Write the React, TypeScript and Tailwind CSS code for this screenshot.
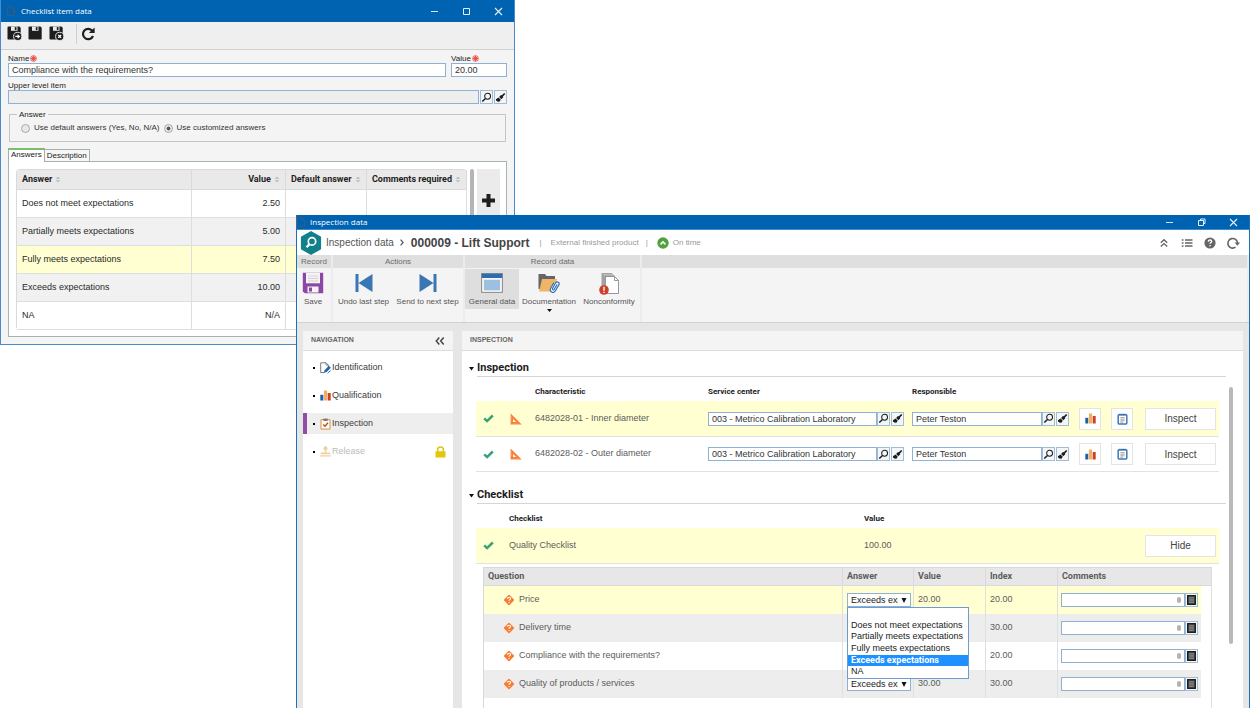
import React, { useState } from "react";

const questions = [
  { id: "price", text: "Price", value: "20.00", index: "20.00" },
  { id: "delivery", text: "Delivery time", value: "30.00", index: "30.00" },
  { id: "compliance", text: "Compliance with the requirements?", value: "20.00", index: "20.00" },
  { id: "quality", text: "Quality of products / services", value: "30.00", index: "30.00" },
];

const answerOptions = [
  "",
  "Does not meet expectations",
  "Partially meets expectations",
  "Fully meets expectations",
  "Exceeds expectations",
  "NA",
];

const answerRows = [
  { name: "Does not meet expectations", value: "2.50", bg: "bg-white" },
  { name: "Partially meets expectations", value: "5.00", bg: "bg-[#f1f1f1]" },
  { name: "Fully meets expectations", value: "7.50", bg: "bg-[#ffffd2]" },
  { name: "Exceeds expectations", value: "10.00", bg: "bg-[#f1f1f1]" },
  { name: "NA", value: "N/A", bg: "bg-white" },
];

/* ---------- icons ---------- */

function PageIcon() {
  return (
    <svg viewBox="0 0 8 10" className="h-[10px] w-2" fill="none" stroke="#3f5a78" strokeWidth="1">
      <path d="M.5.5h4.5l2.5 2.5v6.5h-7zM5 .5V3h2.5" />
    </svg>
  );
}

function DiskIcon({ badge }: { badge?: "next" | "close" }) {
  return (
    <svg viewBox="0 0 15 15" className="h-[15px] w-[15px]">
      <path d="M1.5 0.5h11l1.2 1.2v11q0 .8-.8.8H1.3q-.8 0-.8-.8V1.300q0-.8 1-.8z" fill="#1e1e1e" />
      <path d="M4 .5h6.500v4.300H4z" fill="#e9e9e9" />
      <path d="M7.800 1.100h1.700v3H7.800z" fill="#1e1e1e" />
      {badge && (
        <>
          <circle cx="10.700" cy="10.400" r="4.100" fill="#1e1e1e" stroke="#efefef" strokeWidth=".9" />
          {badge === "next" ? (
            <path d="M8.300 9.700h2.300V8l2.700 2.400-2.700 2.400v-1.700H8.300z" fill="#fff" />
          ) : (
            <path d="M9.300 9l2.800 2.800M12.100 9l-2.800 2.800" stroke="#fff" strokeWidth="1.200" />
          )}
        </>
      )}
    </svg>
  );
}

function ReloadIcon() {
  return (
    <svg viewBox="0 0 14 14" className="h-[14px] w-[14px]" fill="none">
      <path d="M11.300 3.800A5.200 5.200 0 1 0 12 9" stroke="#1e1e1e" strokeWidth="2.200" />
      <path d="M13.600.4v5.700H7.900z" fill="#1e1e1e" />
    </svg>
  );
}

function RequiredIcon() {
  return (
    <svg viewBox="0 0 8 8" className="h-[7px] w-[7px]" fill="none" stroke="#e8463c">
      <circle cx="4" cy="4" r="3.300" strokeWidth=".8" fill="#fbd5d2" />
      <path d="M4 1v6M1 4h6M2 2l4 4M6 2L2 6" strokeWidth="1" />
    </svg>
  );
}

function SearchGlyph() {
  return (
    <svg viewBox="0 0 12 12" className="h-[11px] w-[11px]" fill="none" stroke="#1c1c1c">
      <circle cx="7.200" cy="4.600" r="3.200" strokeWidth="1.100" />
      <path d="M4.900 7L1.400 10.300" strokeWidth="1.600" />
    </svg>
  );
}

function BrushGlyph() {
  return (
    <svg viewBox="0 0 12 12" className="h-[11px] w-[11px]">
      <path d="M9.900 1l1.300 1.200-2.500 2.700.3.800-2.100 2.200-2.400-2.500 2-2.200 1 .3z" fill="#1c1c1c" />
      <path d="M3.900 6l2.400 2.500-2 2.600-.9-1-.7.500-.8-1-.7.100L1 7.900z" fill="#1c1c1c" />
    </svg>
  );
}

function CheckIcon() {
  return (
    <svg viewBox="0 0 11 9" className="h-[9px] w-[11px]" fill="none">
      <path d="M1.200 4.300l2.900 2.800L9.800 1.500" stroke="#36a275" strokeWidth="2.500" />
    </svg>
  );
}

function SetSquareIcon() {
  return (
    <svg viewBox="0 0 12 12" className="h-3 w-3">
      <path d="M.6.5L11.700 11.500H.6zM3 6v3.100h3.200z" fill="#f98038" fillRule="evenodd" />
      <path d="M.6 3.500h1M.6 5.500h1M.6 7.500h1M4 11.500v-1M6 11.500v-1M8 11.500v-1" stroke="#ffe0cd" strokeWidth=".5" />
    </svg>
  );
}

function BarsIcon() {
  return (
    <svg viewBox="0 0 11 11" className="h-[11px] w-[11px]">
      <path d="M.3 4.800h3V10.500h-3z" fill="#1c5faa" />
      <path d="M3.900.5h3.200v10H3.900z" fill="#ecb060" />
      <path d="M7.700 3h3v7.500h-3z" fill="#cf3f26" />
    </svg>
  );
}

function NotepadIcon() {
  return (
    <svg viewBox="0 0 11 12" className="h-3 w-[11px]">
      <rect x="1.200" y="1.700" width="8.600" height="9.200" rx=".8" fill="#fff" stroke="#3b78b8" strokeWidth="1.500" />
      <path d="M3.400 4.600h4.200M3.400 6.200h4.200M3.400 7.800h4.200M3.400 9.200h2.600" stroke="#8c8c8c" strokeWidth=".8" />
      <path d="M2.900.6v2M4.700.6v2M6.400.6v2M8.100.6v2" stroke="#3b6a9a" strokeWidth=".8" />
    </svg>
  );
}

function QuestionDiamond() {
  return (
    <svg viewBox="0 0 12 12" className="h-3 w-3 shrink-0">
      <rect x="2.100" y="2.100" width="7.800" height="7.800" rx=".8" transform="rotate(45 6 6)" fill="#fa7c33" />
      <path d="M4.400 4.700q0-1.500 1.600-1.500t1.500 1.400q0 .8-.8 1.200-.6.300-.6 1M6.100 7.900v1.200" stroke="#fff" strokeWidth="1.100" fill="none" />
    </svg>
  );
}

function NotesIcon() {
  return (
    <svg viewBox="0 0 9 10" className="h-[10px] w-[9px]">
      <rect x=".7" y=".7" width="7.600" height="8.600" fill="#555" stroke="#151515" strokeWidth="1.300" />
      <path d="M2 2.700h5M2 4.300h5M2 5.900h5M2 7.500h5" stroke="#9a9a9a" strokeWidth=".7" />
    </svg>
  );
}

function SaveIcon() {
  return (
    <svg viewBox="0 0 22 22" className="h-[22px] w-[22px]">
      <path d="M.8.8h20.400v20.400H2.800l-2-2z" fill="#8b47a6" />
      <path d="M4 .8h14v10.500H4z" fill="#f6f3f7" />
      <path d="M6 4h10M6 6.500h10M6 9h10" stroke="#c9c9c9" strokeWidth=".8" />
      <path d="M5.500 14.500h11v6H5.500z" fill="#f4f4f4" />
      <path d="M7 15.500h3v4H7z" fill="#8b47a6" />
    </svg>
  );
}

function StepIcon({ back = false }: { back?: boolean }) {
  return (
    <svg viewBox="0 0 20 20" className="h-5 w-5" fill="#3a76b5">
      {back ? <path d="M1.500 1h3v18h-3zM18.500 1v18L4.500 10z" /> : <path d="M15.500 1h3v18h-3zM1.500 1v18l14-9z" />}
    </svg>
  );
}

function GeneralDataIcon() {
  return (
    <svg viewBox="0 0 22 20" className="h-5 w-[22px]">
      <rect x=".6" y=".6" width="20.800" height="18.800" fill="#f4f4f4" stroke="#8a8a8a" strokeWidth="1" />
      <path d="M.8.600h20.400v4.400H.8z" fill="#2f6cae" />
      <path d="M3 6.800h16v10.500H3z" fill="#9dbfe2" />
    </svg>
  );
}

function DocumentationIcon() {
  return (
    <svg viewBox="0 0 22 21" className="h-[21px] w-[22px]">
      <path d="M.5 1h6.500l1.500 2h8.500v13H.5z" fill="#656565" />
      <path d="M4 6h15l-3.500 12.500H1z" fill="#edb565" />
      <g fill="none" stroke="#2d6bb0" strokeWidth="1.100" transform="rotate(30 16.500 14)">
        <path d="M13.800 10.500v6.300q0 3 2.700 3t2.700-3V10q0-2-1.900-2t-1.900 2v6q0 1.100 1 1.100t1-1.100v-5.500" fill="#f4f4f4" />
      </g>
    </svg>
  );
}

function NonconformityIcon() {
  return (
    <svg viewBox="0 0 22 23" className="h-[23px] w-[22px]">
      <path d="M3.500 1h10l3 2.500v3H7V18H3.500z" fill="#a2a2a2" />
      <path d="M4.800 2.500h10M6 4h10" stroke="#d0d0d0" strokeWidth=".6" />
      <path d="M7.500 4.500h9l4 4V21.500h-13z" fill="#fff" stroke="#8c8c8c" strokeWidth=".9" />
      <path d="M16.500 4.500v4h4" fill="none" stroke="#8c8c8c" strokeWidth=".9" />
      <circle cx="6" cy="18" r="4.800" fill="#cb4229" />
      <path d="M6 14.800v4M6 19.800v1.300" stroke="#fff" strokeWidth="1.400" />
    </svg>
  );
}

function HexLogo() {
  return (
    <svg viewBox="0 0 22 24" className="h-6 w-[22px]">
      <path d="M11 .8l9.400 5.400v11.600L11 23.200 1.600 17.800V6.200z" fill="#12808a" stroke="#12808a" strokeWidth="1.400" strokeLinejoin="round" />
      <circle cx="12" cy="10.400" r="3.700" fill="none" stroke="#fff" strokeWidth="1.700" />
      <path d="M9.400 13.200l-2.900 3" stroke="#fff" strokeWidth="2.200" />
    </svg>
  );
}

function IdentificationIcon() {
  return (
    <svg viewBox="0 0 11 12" className="h-3 w-[11px]" fill="none">
      <path d="M.7.800h5.300l2.300 2.300v2M.7.800v9.700h4" stroke="#6d6d6d" strokeWidth=".9" />
      <path d="M6 .8v2.300h2.300" stroke="#6d6d6d" strokeWidth=".7" />
      <path d="M4 10.800l.6-2.600 4.300-4.400 2 1.900-4.300 4.400z" fill="#1c66ae" />
      <path d="M7.500 11.200l3-2.500" stroke="#1c66ae" strokeWidth=".9" />
    </svg>
  );
}

function ClipboardIcon() {
  return (
    <svg viewBox="0 0 11 12" className="h-3 w-[11px]" fill="none">
      <rect x="1" y="1.700" width="9" height="9.500" rx=".6" fill="#fff" stroke="#dba45c" strokeWidth="1.200" />
      <path d="M3.300.6h4.400v2.300H3.300z" fill="#777" />
      <path d="M3.300 6.500l1.700 1.800L8 4.800" stroke="#c9402c" strokeWidth="1.400" />
    </svg>
  );
}

function StampIcon() {
  return (
    <svg viewBox="0 0 11 11" className="h-[11px] w-[11px]" fill="#f0cfa3">
      <circle cx="5.500" cy="2.400" r="2.100" />
      <path d="M4.800 3.500h1.400v3H10l.7 1.700H.3L1 6.500h3.800zM.3 9.200h10.400v1.200H.3z" />
    </svg>
  );
}

function LockIcon() {
  return (
    <svg viewBox="0 0 11 12" className="h-3 w-[11px]">
      <path d="M2.700 6V3.600q0-2.600 2.800-2.600t2.800 2.600V6" fill="none" stroke="#e0c413" strokeWidth="1.500" />
      <rect x=".5" y="5.300" width="10" height="6.200" rx=".5" fill="#e3c70d" />
    </svg>
  );
}

function SortIcon() {
  return (
    <svg viewBox="0 0 6 7" className="h-[7px] w-[6px] shrink-0" fill="#b9b9b9">
      <path d="M3 .8l2.500 1.900h-5zM3 6.200L.5 4.300h5z" />
    </svg>
  );
}

/* ---------- shared controls ---------- */

function ToolButton({ label, children }: { label: string; children: React.ReactNode }) {
  return (
    <button
      type="button"
      aria-label={label}
      className="flex h-[14px] w-[13px] shrink-0 items-center justify-center border border-[#a3bcd6] bg-[#f3f6f9]"
    >
      {children}
    </button>
  );
}

function LookupField({ label, value, width }: { label: string; value: string; width: string }) {
  return (
    <div className="flex items-center">
      <input
        aria-label={label}
        defaultValue={value}
        className={`h-[14px] ${width} border border-[#8fb1d3] bg-white pl-[3px] text-[9px] leading-3 text-[#333]`}
      />
      <ToolButton label={`Search ${label}`}>
        <SearchGlyph />
      </ToolButton>
      <span className="w-px" />
      <ToolButton label={`Clear ${label}`}>
        <BrushGlyph />
      </ToolButton>
    </div>
  );
}

function WindowButtons({ restored = false }: { restored?: boolean }) {
  return (
    <div className="flex items-center">
      <button type="button" aria-label="Minimize" className="flex h-3 w-8 items-center justify-center">
        <svg viewBox="0 0 9 9" className="h-[9px] w-[9px]" stroke="#d6e6f4">
          <path d="M1 4.500h7" />
        </svg>
      </button>
      <button type="button" aria-label="Maximize" className="flex h-3 w-8 items-center justify-center">
        <svg viewBox="0 0 9 9" className="h-[9px] w-[9px]" fill="none" stroke="#e6f0f9">
          {restored ? <path d="M1.500 2.500h5v5h-5zM3.500 2.500v-1.500h4.500v4.500h-1.500" /> : <path d="M1.500 1.500h6v6h-6z" />}
        </svg>
      </button>
      <button type="button" aria-label="Close" className="flex h-3 w-8 items-center justify-center">
        <svg viewBox="0 0 9 9" className="h-[9px] w-[9px]" stroke="#e6f0f9" strokeWidth="1.100">
          <path d="M1 1l7 7M8 1L1 8" />
        </svg>
      </button>
    </div>
  );
}

/* ---------- checklist item window ---------- */

function HeaderCell({ children, right = false }: { children: React.ReactNode; right?: boolean }) {
  return (
    <th scope="col" className="h-5 border-r border-b border-[#dadada] bg-[#e9e9e9] px-[5px] font-['Roboto',sans-serif] text-[9px] font-bold text-[#1f1f1f]">
      <span className={`flex items-center gap-[3px] whitespace-nowrap ${right ? "justify-end" : ""}`}>
        {children}
        <SortIcon />
      </span>
    </th>
  );
}

function ChecklistItemWindow() {
  const [mode, setMode] = useState("custom");
  return (
    <section className="absolute top-0 left-0 flex w-[515px] flex-col border border-t-0 border-[#4a8ccb] bg-[#f4f4f4] text-[#222]">
      <header className="flex h-[22px] items-center bg-[#0063b1] pl-1.5">
        <PageIcon />
        <h1 className="ml-1.5 flex-1 font-['Open_Sans',sans-serif] text-[8px] leading-3 text-white">Checklist item data</h1>
        <WindowButtons />
      </header>

      <div className="flex h-7 items-center gap-[6px] border-b border-[#cfcfcf] bg-[#efefef] pb-1 pl-[6px]">
        <button type="button" aria-label="Save and continue"><DiskIcon badge="next" /></button>
        <button type="button" aria-label="Save"><DiskIcon /></button>
        <button type="button" aria-label="Save and close"><DiskIcon badge="close" /></button>
        <span className="ml-[6px] h-5 w-px bg-[#cfcfcf]" />
        <button type="button" aria-label="Refresh" className="-ml-0.5"><ReloadIcon /></button>
      </div>

      <div className="flex flex-col px-[7px] pt-1 pb-[7px]">
        <div className="flex gap-[5px]">
          <div className="flex-1">
            <label htmlFor="item-name" className="flex h-[9px] items-center gap-px text-[8px] leading-[9px]">
              Name <RequiredIcon />
            </label>
            <input id="item-name" defaultValue="Compliance with the requirements?" className="block h-[14px] w-full border border-[#8fb1d3] bg-white pl-[3px] text-[9px] leading-3 text-[#333]" />
          </div>
          <div className="w-14">
            <label htmlFor="item-value" className="flex h-[9px] items-center gap-px text-[8px] leading-[9px]">
              Value <RequiredIcon />
            </label>
            <input id="item-value" defaultValue="20.00" className="block h-[14px] w-full border border-[#8fb1d3] bg-white pl-[3px] text-[9px] leading-3 text-[#333]" />
          </div>
        </div>

        <label htmlFor="upper-item" className="mt-1 h-[9px] text-[8px] leading-[9px]">Upper level item</label>
        <div className="flex gap-px">
          <input id="upper-item" readOnly className="h-[14px] min-w-0 flex-1 border border-[#8fb1d3] bg-[#eeeeee]" />
          <ToolButton label="Search upper level item"><SearchGlyph /></ToolButton>
          <ToolButton label="Clear upper level item"><BrushGlyph /></ToolButton>
        </div>

        <fieldset className="mt-1.5 mr-px ml-px h-8 border border-[#c4c4c4] px-[11px]">
          <legend className="-ml-[4px] px-0.5 text-[8px] leading-[9px]">Answer</legend>
          <div className="flex items-center pt-[3px] text-[8px] leading-3 text-[#333]">
            <input
              type="radio" id="default-answers" name="mode" checked={mode === "default"} onChange={() => setMode("default")}
              className="h-[9px] w-[9px] appearance-none rounded-full border border-[#a9a9a9] bg-[#e8e8e8]"
            />
            <label htmlFor="default-answers" className="ml-[4px]">Use default answers (Yes, No, N/A)</label>
            <input
              type="radio" id="custom-answers" name="mode" checked={mode === "custom"} onChange={() => setMode("custom")}
              className="ml-[4px] h-[9px] w-[9px] appearance-none rounded-full border border-[#a9a9a9] bg-[#e8e8e8] checked:bg-[radial-gradient(circle,#555_35%,#e8e8e8_45%)]"
            />
            <label htmlFor="custom-answers" className="ml-[4px]">Use customized answers</label>
          </div>
        </fieldset>

        <div role="tablist" className="mt-1.5 flex items-end text-[8px]">
          <button type="button" role="tab" aria-selected="true" className="z-10 -mb-px h-[14px] border border-t-2 border-b-0 border-[#a7adb3] border-t-[#7dbb6d] bg-white px-0.5 pb-1 leading-[9px]">Answers</button>
          <button type="button" role="tab" aria-selected="false" className="h-[12px] border border-b-0 border-l-0 border-[#a7adb3] bg-[#f7f7f7] px-0.5 leading-[10px]">Description</button>
        </div>

        <div className="flex border border-[#a7b3b0] bg-white px-1.5 pt-[7px] pb-1.5 pl-[7px]">
          <table className="flex-1 table-fixed border-separate border-spacing-0 rounded-sm border border-r-0 border-b-0 border-[#dadada]">
            <colgroup>
              <col />
              <col className="w-[94px]" />
              <col className="w-[81px]" />
              <col className="w-[99px]" />
            </colgroup>
            <thead>
              <tr className="text-left">
                <HeaderCell>Answer</HeaderCell>
                <HeaderCell right>Value</HeaderCell>
                <HeaderCell>Default answer</HeaderCell>
                <HeaderCell>Comments required</HeaderCell>
              </tr>
            </thead>
            <tbody>
              {answerRows.map((row) => (
                <tr key={row.name} className={`text-[9px] text-[#2a2a2a] ${row.bg}`}>
                  <td className="h-7 border-r border-b border-[#dedede] px-[5px]">{row.name}</td>
                  <td className="border-r border-b border-[#dedede] px-[5px] text-right">{row.value}</td>
                  <td className="border-r border-b border-[#dedede]" />
                  <td className="border-r border-b border-[#dedede]" />
                </tr>
              ))}
            </tbody>
          </table>
          <span className="mx-[3px] h-[100px] w-1 rounded-full bg-[#b5b5b5]" />
          <div className="w-[23px] bg-[#ebebeb] pt-[25px]">
            <button type="button" aria-label="Add answer" className="flex w-full justify-center">
              <svg viewBox="0 0 13 13" className="h-[13px] w-[13px]" stroke="#1e1e1e" strokeWidth="4">
                <path d="M6.500 0v13M0 6.500h13" />
              </svg>
            </button>
          </div>
        </div>
      </div>
    </section>
  );
}

/* ---------- inspection window ---------- */

function RibbonGroup({ title, children, className = "" }: { title: string; children?: React.ReactNode; className?: string }) {
  return (
    <div className={`flex flex-col border-r-2 border-[#ececec] ${className}`}>
      <div className="flex h-[13px] items-center justify-center bg-[#dfdfdf] text-[8px] text-[#6c6c6c]">{title}</div>
      <div className="flex h-[54px] items-start bg-[#f4f4f4]">{children}</div>
    </div>
  );
}

function RibbonButton({ label, icon, width, active = false, menu = false }: { label: string; icon: React.ReactNode; width: string; active?: boolean; menu?: boolean }) {
  return (
    <button type="button" className={`mt-px flex flex-col items-center whitespace-nowrap text-[8px] leading-[10px] text-[#555] ${width} ${active ? "bg-[#dedede]" : ""}`}>
      <span className="flex h-7 items-center">{icon}</span>
      <span className="h-3">{label}</span>
      {menu && (
        <svg viewBox="0 0 5 3" className="h-[3px] w-[5px]"><path d="M0 0h5L2.500 3z" fill="#111" /></svg>
      )}
    </button>
  );
}

function NavItem({ icon, label, active = false, locked = false }: { icon: React.ReactNode; label: string; active?: boolean; locked?: boolean }) {
  return (
    <li>
      <a
        href="#"
        className={`flex h-[21px] items-center border-l-4 pr-[7px] pl-1.5 text-[9px] ${active ? "border-[#8e4ea8] bg-[#eeeeee]" : "border-transparent"} ${locked ? "text-[#bcbcbc]" : "text-[#3c3c3c]"}`}
      >
        <span className="mr-1 h-0.5 w-0.5 bg-black" />
        <span className="flex w-[13px] justify-center">{icon}</span>
        <span className="flex-1">{label}</span>
        {locked && <LockIcon />}
      </a>
    </li>
  );
}

function SectionTitle({ children }: { children: React.ReactNode }) {
  return (
    <h2 className="flex items-center font-['Roboto',sans-serif] text-[11px] leading-4 font-bold text-[#1d1d1d]">
      <svg viewBox="0 0 5 4" className="mr-[3px] h-1 w-[5px]"><path d="M0 0h5L2.500 3.500z" fill="#111" /></svg>
      <span className="flex-1 border-b border-[#d5d5d5]">{children}</span>
    </h2>
  );
}

function InspectButton({ children }: { children: React.ReactNode }) {
  return (
    <button type="button" className="block h-[22px] w-[71px] border border-[#e4e4e4] bg-white text-[10px] text-[#444]">{children}</button>
  );
}

function IconButton({ label, children }: { label: string; children: React.ReactNode }) {
  return (
    <button type="button" aria-label={label} className="flex h-[22px] w-[22px] items-center justify-center border border-[#e4e4e4] bg-white">{children}</button>
  );
}

function CharacteristicTable() {
  const rows = [
    { name: "6482028-01 - Inner diameter", bg: "bg-[#ffffd2]", h: "h-9" },
    { name: "6482028-02 - Outer diameter", bg: "bg-white", h: "h-[35px]" },
  ];
  const head = "h-6 pt-[6px] align-middle";
  return (
    <table className="w-full table-fixed border-separate border-spacing-0 text-left text-[9px] text-[#5c5c5c]">
      <colgroup>
        <col className="w-[26px]" />
        <col className="w-[33px]" />
        <col />
        <col className="w-[204px]" />
        <col className="w-[167px]" />
        <col className="w-8" />
        <col className="w-[34px]" />
        <col className="w-[74px]" />
      </colgroup>
      <thead className="font-['Roboto',sans-serif] text-[8px] text-[#222]">
        <tr>
          <td className={head} />
          <td />
          <th scope="col" className={head}>Characteristic</th>
          <th scope="col" className={head}>Service center</th>
          <th scope="col" className={head}>Responsible</th>
          <td />
          <td />
          <td />
        </tr>
      </thead>
      <tbody>
        {rows.map((row) => (
          <tr key={row.name} className={`${row.bg} ${row.h} *:border-b *:border-[#e2e2e2]`}>
            <td className="pl-[7px]"><CheckIcon /></td>
            <td className="pl-2"><SetSquareIcon /></td>
            <td>{row.name}</td>
            <td><LookupField label={`Service center ${row.name}`} value="003 - Metrico Calibration Laboratory" width="w-[169px]" /></td>
            <td><LookupField label={`Responsible ${row.name}`} value="Peter Teston" width="w-[130px]" /></td>
            <td><IconButton label="Chart"><BarsIcon /></IconButton></td>
            <td><IconButton label="Notes"><NotepadIcon /></IconButton></td>
            <td><InspectButton>Inspect</InspectButton></td>
          </tr>
        ))}
      </tbody>
    </table>
  );
}

function AnswerSelect({ label, open = false }: { label: string; open?: boolean }) {
  const [value, setValue] = useState("Exceeds expectations");
  return (
    <div className="relative ml-[4px] w-16">
      <select
        aria-label={`Answer: ${label}`}
        value={value}
        onChange={(e) => setValue(e.target.value)}
        className="block h-[14px] w-full appearance-none overflow-hidden border border-[#8fb1d3] bg-white pr-3 pl-[3px] text-[9px] leading-3 text-[#222]"
      >
        {answerOptions.map((o) => (
          <option key={o} value={o}>{o}</option>
        ))}
      </select>
      <svg viewBox="0 0 6 5" className="pointer-events-none absolute top-[5px] right-[4px] h-[5px] w-[6px]"><path d="M.5 0h5L3 5z" fill="#111" /></svg>
      {open && (
        <ul role="listbox" className="absolute top-[14px] left-0 z-20 flex h-[72px] w-[122px] flex-col border border-[#6f9bd0] bg-white text-[9px] leading-[11px] whitespace-nowrap text-[#222]">
          {answerOptions.map((o) => (
            <li
              key={o}
              role="option"
              aria-selected={o === value}
              className={`min-h-0 flex-1 pl-[3px] ${o === value ? "bg-[#1e90ff] font-['Roboto',sans-serif] font-bold text-white" : ""}`}
            >
              {o}
            </li>
          ))}
        </ul>
      )}
    </div>
  );
}

function QuestionTable() {
  const head = "h-[18px] border-r border-b border-[#dadada] bg-[#e7e7e7] pl-1";
  const cell = "h-7 border-r border-[#dfdfdf]";
  return (
    <table className="w-full table-fixed border-separate border-spacing-0 border-t border-l border-[#d8d8d8] text-left text-[9px] text-[#5c5c5c]">
      <colgroup>
        <col />
        <col className="w-[71px]" />
        <col className="w-[72px]" />
        <col className="w-[72px]" />
        <col className="w-[143px]" />
        <col className="w-[11px]" />
      </colgroup>
      <thead className="font-['Roboto',sans-serif]">
        <tr>
          <th scope="col" className={head}>Question</th>
          <th scope="col" className={head}>Answer</th>
          <th scope="col" className={head}>Value</th>
          <th scope="col" className={head}>Index</th>
          <th scope="col" colSpan={2} className={head}>Comments</th>
        </tr>
      </thead>
      <tbody>
        {questions.map((q, i) => {
          const bg = i === 0 ? "bg-[#ffffd2]" : i % 2 ? "bg-[#ededed]" : "bg-white";
          return (
            <tr key={q.id}>
              <td className={`${cell} ${bg}`}>
                <span className="flex items-center gap-1 pl-[19px]"><QuestionDiamond />{q.text}</span>
              </td>
              <td className={`${cell} ${bg}`}><AnswerSelect label={q.text} open={i === 0} /></td>
              <td className={`${cell} ${bg} pl-1`}>{q.value}</td>
              <td className={`${cell} ${bg} pl-1`}>{q.index}</td>
              <td className={`h-7 ${bg} pl-[3px]`}>
                <div className="flex items-center">
                  <div className="relative">
                    <input aria-label={`Comments: ${q.text}`} className="block h-[14px] w-[124px] border border-[#8fb1d3] bg-white px-1 text-[9px]" />
                    <span className="absolute top-1 right-1 h-1.5 w-1 rounded-full bg-[#b4b4b4]" />
                  </div>
                  <ToolButton label={`Edit comments: ${q.text}`}><NotesIcon /></ToolButton>
                </div>
              </td>
              <td className="border-r border-[#dfdfdf] bg-white" />
            </tr>
          );
        })}
        <tr>
          <td colSpan={6} className="h-10 border-r border-[#dfdfdf] bg-white" />
        </tr>
      </tbody>
    </table>
  );
}

function InspectionWindow() {
  return (
    <section className="absolute top-[215px] right-0 bottom-0 left-[296px] flex flex-col overflow-hidden border-x border-[#1f6fb6] bg-[#e6e6e6]">
      <header className="flex h-[15px] shrink-0 items-center border-b border-[#3f8ace] bg-[#0063b1]">
        <PageIcon />
        <h1 className="ml-[5px] flex-1 font-['Open_Sans',sans-serif] text-[8px] leading-3 text-white">Inspection data</h1>
        <WindowButtons restored />
      </header>

      <div className="flex h-[25px] shrink-0 items-center bg-white pr-[9px] pl-[3px]">
        <HexLogo />
        <span className="ml-1 text-[10px] text-[#555]">Inspection data</span>
        <svg viewBox="0 0 4 7" className="mx-[6px] h-[7px] w-1" fill="none" stroke="#555" strokeWidth="1.200"><path d="M.6.6l2.500 2.900L.6 6.400" /></svg>
        <strong className="ml-px text-[12px] text-[#444]">000009 - Lift Support</strong>
        <span className="ml-[10px] text-[8px] text-[#999]">|</span>
        <span className="ml-[9px] text-[8px] text-[#999]">External finished product</span>
        <span className="ml-[7px] text-[8px] text-[#999]">|</span>
        <svg viewBox="0 0 12 12" className="ml-[9px] h-3 w-3">
          <circle cx="6" cy="6" r="5.700" fill="#4fa23c" />
          <path d="M3.500 7.300L6 4.900l2.500 2.400" fill="none" stroke="#fff" strokeWidth="1.600" />
        </svg>
        <span className="ml-[4px] flex-1 text-[8px] text-[#999]">On time</span>
        <div className="flex items-center gap-[11px] text-[#666]">
          <button type="button" aria-label="Collapse">
            <svg viewBox="0 0 12 12" className="block h-3 w-3" fill="none" stroke="currentColor" strokeWidth="1.400"><path d="M2.800 5.700l3.200-2.900 3.200 2.900M2.800 9.500l3.200-2.900 3.200 2.900" /></svg>
          </button>
          <button type="button" aria-label="List">
            <svg viewBox="0 0 12 12" className="block h-3 w-3" stroke="currentColor" strokeWidth="1.300"><path d="M.8 3h1.700M4 3h7.500M.8 6h1.700M4 6h7.500M.8 9h1.700M4 9h7.500" /></svg>
          </button>
          <button type="button" aria-label="Help">
            <svg viewBox="0 0 12 12" className="block h-3 w-3"><circle cx="6" cy="6" r="5.600" fill="currentColor" /><path d="M4.300 4.700q0-1.700 1.700-1.700t1.700 1.500q0 .8-.9 1.200-.8.400-.8 1.100M6 8v1.200" fill="none" stroke="#fff" strokeWidth="1.300" /></svg>
          </button>
          <button type="button" aria-label="Refresh">
            <svg viewBox="0 0 13 12" className="block h-3 w-[13px]" fill="none"><path d="M8.500 10.200A4.800 4.800 0 1 1 10.500 6" stroke="currentColor" strokeWidth="1.600" /><path d="M7.700 5.500h5.300L10.400 8.700z" fill="currentColor" /></svg>
          </button>
        </div>
      </div>

      <nav aria-label="Ribbon" className="flex shrink-0 border-b border-[#d2d2d2]">
        <RibbonGroup title="Record" className="w-[36px]">
          <RibbonButton label="Save" icon={<SaveIcon />} width="w-8" />
        </RibbonGroup>
        <RibbonGroup title="Actions" className="w-[132px]">
          <RibbonButton label="Undo last step" icon={<StepIcon back />} width="w-[61px]" />
          <RibbonButton label="Send to next step" icon={<StepIcon />} width="w-[67px]" />
        </RibbonGroup>
        <RibbonGroup title="Record data" className="w-[177px]">
          <RibbonButton label="General data" icon={<GeneralDataIcon />} width="w-[54px]" active />
          <RibbonButton label="Documentation" icon={<DocumentationIcon />} width="w-[60px]" menu />
          <RibbonButton label="Nonconformity" icon={<NonconformityIcon />} width="w-[60px]" />
        </RibbonGroup>
        <RibbonGroup title="" className="flex-1 border-r-0" />
      </nav>

      <div className="flex min-h-0 flex-1 gap-[9px] pt-2 pr-[6px] pl-[6px]">
        <aside className="flex w-[150px] shrink-0 flex-col bg-white">
          <div className="flex h-5 items-center justify-between border-b border-[#dcdcdc] bg-[#f4f4f4] px-2 text-[7px] font-bold text-[#666]">
            NAVIGATION
            <button type="button" aria-label="Collapse navigation">
              <svg viewBox="0 0 10 8" className="h-2 w-[10px]" fill="none" stroke="#444" strokeWidth="1.500"><path d="M4.300.5L1.300 4l3 3.500M8.700.5L5.700 4l3 3.500" /></svg>
            </button>
          </div>
          <ul className="flex flex-col gap-[7px] pt-[6px]">
            <NavItem icon={<IdentificationIcon />} label="Identification" />
            <NavItem icon={<BarsIcon />} label="Qualification" />
            <NavItem icon={<ClipboardIcon />} label="Inspection" active />
            <NavItem icon={<StampIcon />} label="Release" locked />
          </ul>
        </aside>

        <main className="flex min-w-0 flex-1 flex-col bg-white">
          <div className="flex h-5 shrink-0 items-center border-b border-[#dcdcdc] bg-[#f4f4f4] pl-2 text-[7px] font-bold text-[#666]">INSPECTION</div>
          <div className="flex min-h-0 flex-1">
            <div className="min-w-0 flex-1 pt-[9px] pl-[7px]">
              <SectionTitle>Inspection</SectionTitle>
              <div className="px-[7px]">
                <CharacteristicTable />
              </div>
              <div className="pt-[15px]">
                <SectionTitle>Checklist</SectionTitle>
              </div>
              <div className="px-[7px]">
                <table className="w-full table-fixed border-separate border-spacing-0 text-left text-[9px] text-[#5c5c5c]">
                  <colgroup>
                    <col className="w-[33px]" />
                    <col />
                    <col className="w-[281px]" />
                    <col className="w-[74px]" />
                  </colgroup>
                  <thead className="font-['Roboto',sans-serif] text-[8px] text-[#222]">
                    <tr>
                      <td className="h-6" />
                      <th scope="col" className="pt-[6px]">Checklist</th>
                      <th scope="col" className="pt-[6px]">Value</th>
                      <td />
                    </tr>
                  </thead>
                  <tbody>
                    <tr className="h-9 bg-[#ffffd2] *:border-b *:border-[#e2e2e2]">
                      <td className="pl-[7px]"><CheckIcon /></td>
                      <td>Quality Checklist</td>
                      <td>100.00</td>
                      <td><InspectButton>Hide</InspectButton></td>
                    </tr>
                  </tbody>
                </table>
              </div>
              <div className="px-[14px] pt-[3px]">
                <QuestionTable />
              </div>
            </div>
            <div className="flex w-[17px] shrink-0 justify-center pt-9 pr-[7px]">
              <span className="h-[257px] w-1 rounded-full bg-[#b9b9b9]" />
            </div>
          </div>
        </main>
      </div>
    </section>
  );
}

export default function App() {
  return (
    <div className="relative min-h-screen overflow-hidden bg-white font-['Liberation_Sans',Arial,sans-serif]">
      <ChecklistItemWindow />
      <InspectionWindow />
    </div>
  );
}
